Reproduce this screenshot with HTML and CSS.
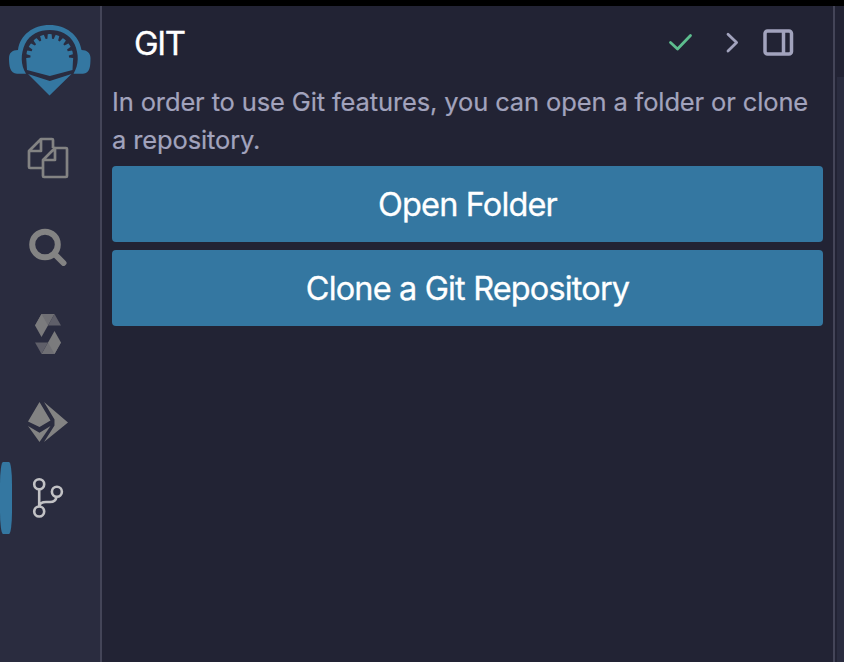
FILE: index.html
```html
<!DOCTYPE html>
<html lang="en">
<head>
<meta charset="utf-8">
<title>Git</title>
<link rel="stylesheet" href="styles.css">
</head>
<body>
<div class="app">
  <nav class="rail">
    <svg class="logo" viewBox="8 24 84 72" width="84" height="72">
      <path class="blue" d="M18 50C20 35 33 25 49.500 25S79 35 81.500 50C87 50 90.500 53 90.500 58C90.500 66 90 73.700 83 73.700H73.500C79 65 79 54 74.500 44C69.500 34 60 30 49.700 30S30 34 25 44C20.500 54 20.500 65 26 73.700H17C10 73.700 9 66 9 58C9 53 12 50 18 50Z"/>
      <path class="blue" d="M27 70L26.500 62A23.600 23.600 0 1 1 72.900 62L72.500 70L49.800 76Z"/>
      <g class="notches" transform="translate(49.700 58)">
        <path transform="rotate(-85.500)" d="M-2.300-25H2.300L.9-19.300H-.9Z"/>
        <path transform="rotate(-66.500)" d="M-2.300-25H2.300L.9-19.300H-.9Z"/>
        <path transform="rotate(-47.500)" d="M-2.300-25H2.300L.9-19.300H-.9Z"/>
        <path transform="rotate(-28.500)" d="M-2.300-25H2.300L.9-19.300H-.9Z"/>
        <path transform="rotate(-9.500)" d="M-2.300-25H2.300L.9-19.300H-.9Z"/>
        <path transform="rotate(9.500)" d="M-2.300-25H2.300L.9-19.300H-.9Z"/>
        <path transform="rotate(28.500)" d="M-2.300-25H2.300L.9-19.300H-.9Z"/>
        <path transform="rotate(47.500)" d="M-2.300-25H2.300L.9-19.300H-.9Z"/>
        <path transform="rotate(66.500)" d="M-2.300-25H2.300L.9-19.300H-.9Z"/>
        <path transform="rotate(85.500)" d="M-2.300-25H2.300L.9-19.300H-.9Z"/>
      </g>
      <path class="blue" d="M28 74L49.800 81L71.500 74L49.500 95.500Z"/>
    </svg>
    <svg class="files" viewBox="0 0 40 40" width="40" height="40">
      <path class="line" d="M14.500 30H2Q1 30 1 29V13L13 1H24Q25 1 25 2V10M13 1V13H1M27 10H38Q39 10 39 11V38Q39 39 38 39H16Q15 39 15 38V22L27 10V22H15"/>
    </svg>
    <svg class="search" viewBox="0 0 38 38" width="38" height="38">
      <circle cx="16" cy="16.500" r="12.800"/><path d="M25.500 26L34.500 35"/>
    </svg>
    <svg class="solidity" viewBox="0 0 26 40" width="26" height="40">
      <path fill="#6f6f74" d="M6.500 0H19.500L13 11.500H0Z"/>
      <path fill="#5f5f69" d="M19.500 0L26 11.500H13Z"/>
      <path fill="#7b7b7d" d="M0 11.500L6.500 0L13 11.500L6.500 23Z"/>
      <path fill="#6f6f74" d="M6.500 40L13 28.500H26L19.500 40Z"/>
      <path fill="#5f5f69" d="M0 28.500H13L6.500 40Z"/>
      <path fill="#7b7b7d" d="M19.500 17L26 28.500L19.500 40L13 28.500Z"/>
    </svg>
    <svg class="deploy" viewBox="0 0 40 40" width="40" height="40">
      <path fill="#838383" d="M11.500 0L22.500 18.500L11.500 25L0 19.500ZM0 24L11.500 30.700L22.500 24L11.500 40ZM16 0L40 20.500L16 40L26.500 23.500V17.500Z"/>
    </svg>
    <div class="active-item">
      <svg viewBox="32 477 32 42" width="32" height="42">
        <g fill="none" stroke="#c2c2c5" stroke-width="2.600"><circle cx="39.200" cy="484.200" r="5"/><circle cx="39.200" cy="511.500" r="5"/><circle cx="56.900" cy="491.700" r="5"/><path d="M39.200 489.500V506M39.500 506C40 502.500 43 502 46 502H50C54 502 56 500 56.500 497"/></g>
      </svg>
    </div>
  </nav>
  <main class="panel">
    <header>
      <h1>GIT</h1>
      <svg class="tools" viewBox="668 28 128 30" width="128" height="30" fill="none">
        <path stroke="#5dbd8e" stroke-width="2.800" stroke-linecap="round" stroke-linejoin="round" d="M670.500 42.500L677.500 49L690.500 35.500"/>
        <path stroke="#a2a3bd" stroke-width="2.800" stroke-linecap="round" stroke-linejoin="round" d="M728 34.200L736.600 42.600L728 51"/>
        <rect x="765" y="31" width="26.500" height="23" rx="2.500" stroke="#a2a3bd" stroke-width="3.500"/>
        <path stroke="#a2a3bd" stroke-width="3.500" d="M783.500 31V54"/>
      </svg>
    </header>
    <p>In order to use Git features, you can open a folder or clone<br>a repository.</p>
    <button class="open" type="button">Open Folder</button>
    <button class="clone" type="button">Clone a Git Repository</button>
  </main>
  <aside></aside>
</div>
</body>
</html>
```
FILE: styles.css
```css
* { box-sizing: border-box; }
body { margin: 0; background: #222334; font-family: Inter, "Liberation Sans", sans-serif; overflow: hidden; }
.app { display: flex; height: 662px; border-top: 6px solid #000; }
.rail { width: 102px; background: #2a2c3f; border-right: 2px solid #444558; display: flex; flex-direction: column; align-items: flex-start; }
.rail svg { display: block; flex: none; }
.blue { fill: #3477a1; }
.notches { fill: #2a2c3f; }
.logo { margin: 18px 0 0 8px; }
.files { margin: 42px 0 0 28px; overflow: visible; }
.line { fill: none; stroke: #838383; stroke-width: 2.7; stroke-linejoin: round; }
.search { margin: 50px 0 0 29px; fill: none; stroke: #838383; stroke-width: 6; stroke-linecap: round; }
.solidity { margin: 48px 0 0 35px; }
.deploy { margin: 48px 0 0 28px; }
.active-item { display: flex; align-items: center; height: 72px; margin-top: 20px; }
.active-item::before { content: ""; width: 12px; height: 72px; margin-right: 20px; background: #3477a1; border-radius: 3px / 22px; }
.panel { width: 733px; padding: 0 10px; border-right: 2px solid #444558; }
header { height: 77px; padding: 0 27px 0 22px; display: flex; align-items: flex-start; justify-content: space-between; }
h1 { margin: 16px 0 0; font-size: 33px; line-height: 42px; font-weight: 400; letter-spacing: -1.4px; color: #fff; -webkit-text-stroke: 0.3px #fff; }
.tools { margin-top: 22px; }
p { margin: 0; height: 83px; font-size: 25.5px; line-height: 38px; font-weight: 400; letter-spacing: -0.13px; color: #a2a3bd; white-space: nowrap; -webkit-text-stroke: 0.2px #a2a3bd; }
button { display: block; width: 711px; height: 76px; margin: 0 0 8px; padding: 2px 0 0; border: 0; border-radius: 4px; background: #3477a1; color: #fff; font: 400 32.5px/40px Inter, sans-serif; -webkit-text-stroke: 0.3px #fff; }
.open { letter-spacing: -0.87px; }
.clone { letter-spacing: -0.86px; }
aside { width: 7px; margin: 71px 0 0 2px; background: #2a2c3f; }
```
